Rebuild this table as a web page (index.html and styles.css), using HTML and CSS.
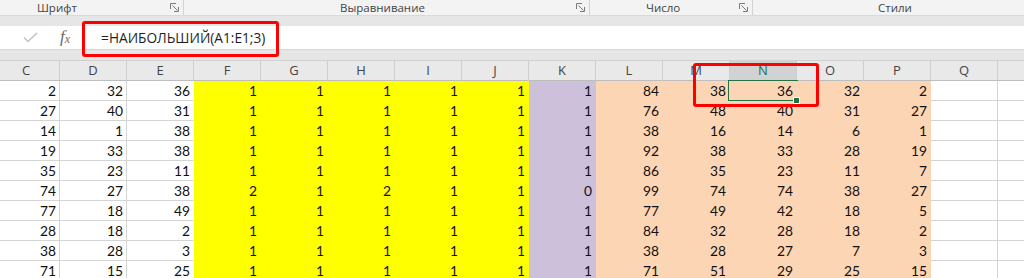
FILE: index.html
```html
<!DOCTYPE html>
<html lang="ru">
<head>
<meta charset="utf-8">
<title>Excel</title>
<link rel="stylesheet" href="styles.css">
</head>
<body>
<div class="app">
  <div class="ribbon">
    <div class="group g1"><span class="glabel">Шрифт</span><svg class="launch" width="9" height="9" viewBox="0 0 9 9"><path d="M0.5 6V0.5H6" fill="none" stroke="#7a7a7a"/><path d="M2.5 2.5L7.5 7.5" stroke="#7a7a7a"/><path d="M8.5 4V8.5H4" fill="none" stroke="#7a7a7a"/></svg></div>
    <div class="group g2"><span class="glabel">Выравнивание</span><svg class="launch" width="9" height="9" viewBox="0 0 9 9"><path d="M0.5 6V0.5H6" fill="none" stroke="#7a7a7a"/><path d="M2.5 2.5L7.5 7.5" stroke="#7a7a7a"/><path d="M8.5 4V8.5H4" fill="none" stroke="#7a7a7a"/></svg></div>
    <div class="group g3"><span class="glabel">Число</span><svg class="launch" width="9" height="9" viewBox="0 0 9 9"><path d="M0.5 6V0.5H6" fill="none" stroke="#7a7a7a"/><path d="M2.5 2.5L7.5 7.5" stroke="#7a7a7a"/><path d="M8.5 4V8.5H4" fill="none" stroke="#7a7a7a"/></svg></div>
    <div class="group g4"><span class="glabel">Стили</span></div>
  </div>
  <div class="band"></div>
  <div class="fbar">
    <span class="check"><svg width="15" height="11" viewBox="0 0 15 11"><path d="M1 5.5L5 9.5L14 1" fill="none" stroke="#c3c3c3" stroke-width="1.6"/></svg></span>
    <span class="fx">f<sub>x</sub></span>
    <span class="formula">=НАИБОЛЬШИЙ(A1:E1;3)</span>
  </div>
  <div class="band band2"></div>
  <div class="sheet">
    <div class="h">C</div><div class="h">D</div><div class="h">E</div><div class="h">F</div><div class="h">G</div><div class="h">H</div><div class="h">I</div><div class="h">J</div><div class="h">K</div><div class="h">L</div><div class="h">M</div><div class="h hs">N</div><div class="h">O</div><div class="h">P</div><div class="h">Q</div><div class="h"></div>

    <div class="w">2</div><div class="w">32</div><div class="w we">36</div><div class="y">1</div><div class="y">1</div><div class="y">1</div><div class="y">1</div><div class="y">1</div><div class="p">1</div><div class="o">84</div><div class="o">38</div><div class="o sel">36</div><div class="o">32</div><div class="o">2</div><div class="w"></div><div class="w"></div>
    <div class="w">27</div><div class="w">40</div><div class="w we">31</div><div class="y">1</div><div class="y">1</div><div class="y">1</div><div class="y">1</div><div class="y">1</div><div class="p">1</div><div class="o">76</div><div class="o">48</div><div class="o">40</div><div class="o">31</div><div class="o">27</div><div class="w"></div><div class="w"></div>
    <div class="w">14</div><div class="w">1</div><div class="w we">38</div><div class="y">1</div><div class="y">1</div><div class="y">1</div><div class="y">1</div><div class="y">1</div><div class="p">1</div><div class="o">38</div><div class="o">16</div><div class="o">14</div><div class="o">6</div><div class="o">1</div><div class="w"></div><div class="w"></div>
    <div class="w">19</div><div class="w">33</div><div class="w we">38</div><div class="y">1</div><div class="y">1</div><div class="y">1</div><div class="y">1</div><div class="y">1</div><div class="p">1</div><div class="o">92</div><div class="o">38</div><div class="o">33</div><div class="o">28</div><div class="o">19</div><div class="w"></div><div class="w"></div>
    <div class="w">35</div><div class="w">23</div><div class="w we">11</div><div class="y">1</div><div class="y">1</div><div class="y">1</div><div class="y">1</div><div class="y">1</div><div class="p">1</div><div class="o">86</div><div class="o">35</div><div class="o">23</div><div class="o">11</div><div class="o">7</div><div class="w"></div><div class="w"></div>
    <div class="w">74</div><div class="w">27</div><div class="w we">38</div><div class="y">2</div><div class="y">1</div><div class="y">2</div><div class="y">1</div><div class="y">1</div><div class="p">0</div><div class="o">99</div><div class="o">74</div><div class="o">74</div><div class="o">38</div><div class="o">27</div><div class="w"></div><div class="w"></div>
    <div class="w">77</div><div class="w">18</div><div class="w we">49</div><div class="y">1</div><div class="y">1</div><div class="y">1</div><div class="y">1</div><div class="y">1</div><div class="p">1</div><div class="o">77</div><div class="o">49</div><div class="o">42</div><div class="o">18</div><div class="o">5</div><div class="w"></div><div class="w"></div>
    <div class="w">28</div><div class="w">18</div><div class="w we">2</div><div class="y">1</div><div class="y">1</div><div class="y">1</div><div class="y">1</div><div class="y">1</div><div class="p">1</div><div class="o">84</div><div class="o">32</div><div class="o">28</div><div class="o">18</div><div class="o">2</div><div class="w"></div><div class="w"></div>
    <div class="w">38</div><div class="w">28</div><div class="w we">3</div><div class="y">1</div><div class="y">1</div><div class="y">1</div><div class="y">1</div><div class="y">1</div><div class="p">1</div><div class="o">38</div><div class="o">28</div><div class="o">27</div><div class="o">7</div><div class="o">3</div><div class="w"></div><div class="w"></div>
    <div class="w">71</div><div class="w">15</div><div class="w we">25</div><div class="y">1</div><div class="y">1</div><div class="y">1</div><div class="y">1</div><div class="y">1</div><div class="p">1</div><div class="o">71</div><div class="o">51</div><div class="o">29</div><div class="o">25</div><div class="o">15</div><div class="w"></div><div class="w"></div>
  </div>
  <div class="mark mark-formula"></div>
  <div class="mark mark-cells"></div>
</div>
</body>
</html>
```
FILE: styles.css
```css
html, body {
  margin: 0;
  padding: 0;
}
body {
  width: 1024px;
  height: 278px;
  overflow: hidden;
  background: #ffffff;
  font-family: "Open Sans", "Noto Sans", sans-serif;
}
.app {
  position: relative;
  width: 1024px;
  height: 278px;
  overflow: hidden;
}
.ribbon {
  display: flex;
  height: 15px;
  background: #f3f3f3;
  border-bottom: 1px solid #dadada;
}
.group {
  display: flex;
  align-items: center;
  height: 15px;
  box-sizing: border-box;
  border-right: 1px solid #d2d2d2;
  position: relative;
}
.glabel {
  font-size: 11.5px;
  color: #444444;
  line-height: 15px;
  white-space: nowrap;
}
.launch {
  position: absolute;
  top: 3px;
  right: 4px;
}
.g1 { width: 184px; padding-left: 37px; }
.g2 { width: 406px; padding-left: 156px; }
.g3 { width: 163px; padding-left: 56px; }
.g4 { flex: 1; padding-left: 125px; border-right: none; }
.band {
  height: 10px;
  background: #e6e6e6;
}
.fbar {
  display: flex;
  align-items: center;
  height: 23px;
  background: #ffffff;
  border-bottom: 1px solid #d6d6d6;
}
.check {
  display: flex;
  margin-left: 23px;
  width: 15px;
  height: 11px;
}
.fx {
  margin-left: 22px;
  font-family: "Liberation Serif", "DejaVu Serif", serif;
  font-style: italic;
  font-size: 17px;
  color: #6b6b6b;
  line-height: 20px;
}
.fx sub {
  font-size: 12px;
  vertical-align: -1px;
}
.formula {
  margin-left: 31px;
  font-size: 13.7px;
  color: #1e1e1e;
  white-space: nowrap;
}
.band2 {
  height: 10px;
  border-bottom: 1px solid #d0d0d0;
}
.sheet {
  display: grid;
  grid-template-columns: repeat(16, 67px);
  grid-auto-rows: 20px;
  margin-left: -7px;
}
.sheet > div {
  box-sizing: border-box;
  height: 20px;
  border-right: 1px solid #d4d4d4;
  border-bottom: 1px solid #d4d4d4;
  text-align: right;
  padding-right: 3px;
  font-family: Lato, "Open Sans", sans-serif;
  font-size: 13.8px;
  line-height: 20px;
  color: #111111;
  white-space: nowrap;
  position: relative;
}
.sheet > .h {
  background: #e9e9e9;
  text-align: center;
  padding-right: 0;
  font-family: "Open Sans", "Noto Sans", sans-serif;
  font-size: 13px;
  line-height: 19px;
  color: #444444;
  border-right-color: #cfcfcf;
  border-bottom-color: #bdbdbd;
}
.sheet > .hs {
  background: #d2d2d2;
  color: #217346;
}
.sheet > .we { border-right-color: #ffffff; }
.sheet > .y { background: #ffff00; border-color: #ffff00; }
.sheet > .p { background: #ccc0da; border-color: #ccc0da; }
.sheet > .o { background: #fcd5b4; border-color: #fcd5b4; }
.sheet > .sel::after {
  content: "";
  position: absolute;
  left: -2px;
  top: -1px;
  right: -2px;
  bottom: -1px;
  border: 1.5px solid #217346;
}
.sheet > .sel::before {
  content: "";
  position: absolute;
  right: -4px;
  bottom: -4px;
  width: 5px;
  height: 5px;
  background: #217346;
  border: 1px solid #ffffff;
  z-index: 2;
}
.mark {
  position: absolute;
  box-sizing: border-box;
  border: 3px solid #ff0000;
  border-radius: 3px;
  z-index: 5;
}
.mark-formula {
  left: 82px;
  top: 21px;
  width: 197px;
  height: 36px;
}
.mark-cells {
  left: 693px;
  top: 63px;
  width: 126px;
  height: 44px;
}
```
